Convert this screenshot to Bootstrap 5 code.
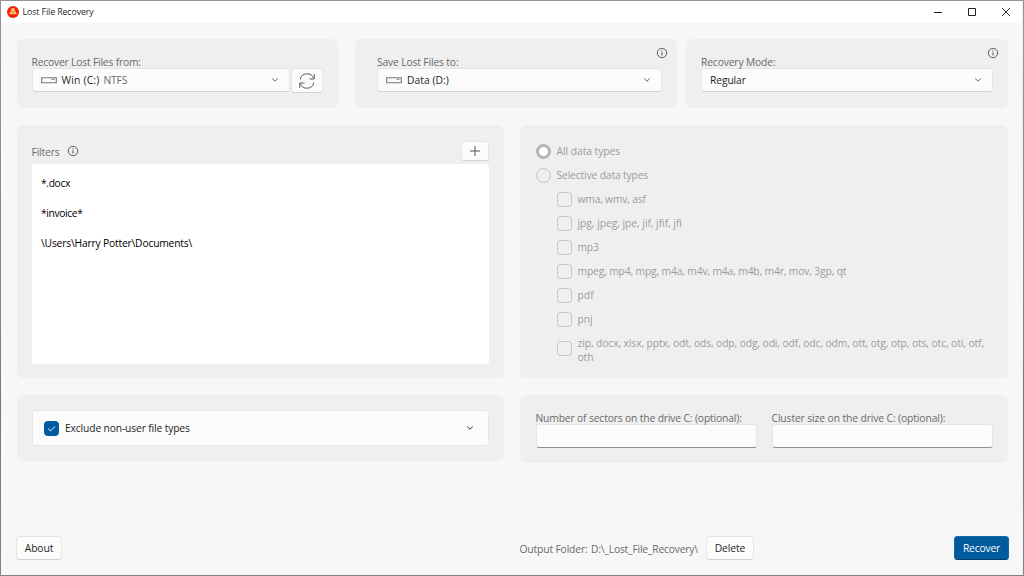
<!DOCTYPE html>
<html lang="en">
<head>
<meta charset="utf-8">
<meta name="viewport" content="width=device-width, initial-scale=1">
<title>Lost File Recovery</title>
<link href="https://cdn.jsdelivr.net/npm/bootstrap@5.3.0/dist/css/bootstrap.min.css" rel="stylesheet">
<style>
body{height:576px;overflow:hidden;padding:1px;background:linear-gradient(#95929a,#858590 55%,#73758a 70%,#838388);font-family:"Open Sans","Noto Sans",sans-serif;font-size:10.3px;line-height:14px;letter-spacing:-.145px;color:#1f1f1f}
.win{height:574px;background:#f7f7f7;border-right:1px solid #f0f0f0}
.titlebar{height:22px;background:#fff;padding-left:6px}
.titlebar .ttl{font-size:8.8px;margin-left:3.5px;letter-spacing:-.1px}
.titlebar svg{display:block}
.caps{gap:24px;margin-right:11px}
.pane{background:#efefef;border-radius:6px}
.main{padding:16px 14px 0 16px}
.top-grid{display:grid;grid-template-columns:321px 17px 322px 9px 322px;height:69px}
.top-grid .pane:nth-child(2){grid-column:3}
.top-grid .pane:nth-child(3){grid-column:5}
.mid-grid{display:grid;grid-template-columns:487px 488px;column-gap:16px;margin-top:17px}
.lbl{color:#6a6a6a;white-space:nowrap}
.txt{white-space:nowrap}
.ctl{background:#fcfcfc;border:1px solid #e5e5e5;border-bottom-color:#d2d2d2;border-radius:3.5px;height:24px}
.combo-row{margin-top:-1px}
.combo{padding:0 10px 0 8px}
.combo svg:last-child{color:#555}
.combo .fs{color:#6a6a6a}
.push{padding:0;color:#1f1f1f;font-size:inherit;line-height:14px;letter-spacing:-.1px;display:flex;align-items:center;justify-content:center;border-radius:3.5px}
.push.go{background:#005a9e;border:1px solid #1468a6;border-bottom-color:#003e6e;color:#fff;width:55px;height:24px;letter-spacing:-.18px}
.filters{background:#fff;border-radius:3.5px;height:200px;padding:12px 9.5px;color:#000}
.filters div{height:30px}
.types{color:#9c9c9c}
.opt{display:flex;align-items:center;height:24px}
.rad{width:15px;height:15px;border:1px solid #c5c5c5;border-radius:50%;margin-right:6px;flex:none}
.rad.on{border:3px solid #b4b4b4;background:#fff}
.chk{width:15px;height:15px;border:1px solid #c5c5c5;border-radius:3.5px;margin-right:6px;flex:none}
.sub-opts{padding-left:21px}
.chk.on{background:#005a9e;border-color:#005a9e}
.field{width:221px;border-bottom:1px solid #8f8f8f;display:block;padding:0;margin-top:-1px}
.foot{margin:73px -1px 0;height:24px}
.ls-wide{letter-spacing:.2px}
.ls-open{letter-spacing:.05px}
.ls-norm{letter-spacing:-.04px}
.ls-soft{letter-spacing:-.106px}
.ls-snug{letter-spacing:-.19px}
.ls-tight{letter-spacing:-.37px}
</style>
</head>
<body>
<svg class="d-none">
<symbol id="drive" viewBox="0 0 16 7"><path d="M.7.7h14.600v5.100H.7z" fill="none" stroke="#777" stroke-width="1.100"/><path d="M10.500 2.300h3" stroke="#777"/></symbol>
<symbol id="chev" viewBox="0 0 8 6"><path d="M1.200 1.500 4 4.200l2.800-2.700" fill="none" stroke="currentColor" stroke-width=".9"/></symbol>
<symbol id="info" viewBox="0 0 12 12"><circle cx="6" cy="6" r="4.700" fill="none" stroke="#4d4d4d" stroke-width=".9"/><path d="M6 5.300v3.200M6 3.300v1.100" stroke="#4d4d4d"/></symbol>
</svg>
<div class="win d-flex flex-column">
<header class="titlebar d-flex align-items-center">
<svg width="12" height="12" viewBox="0 0 12 12"><circle cx="6" cy="6" r="6" fill="#f0200e"/><path d="M2.300 8.300c0-1.800.7-2.600 1.700-2.900C3.500 3.800 4.500 2 6 2s2.500 1.800 2 3.400c1 .3 1.700 1.100 1.700 2.900z" fill="#ffc56c"/><path d="M4 5.600 6 4.800l2 .8M6 6v2" stroke="#f36a28" stroke-width=".6" fill="none"/></svg>
<span class="ttl txt">Lost File Recovery</span>
<div class="caps d-flex ms-auto align-items-center">
<svg width="10" height="10" viewBox="0 0 10 10"><path d="M1 5.500h8" stroke="#222"/></svg>
<svg width="10" height="10" viewBox="0 0 10 10"><path d="M1.500 1.500h7v7h-7z" fill="none" stroke="#222"/></svg>
<svg width="10" height="10" viewBox="0 0 10 10"><path d="m1 1 8 8M9 1 1 9" stroke="#222" stroke-width=".9"/></svg>
</div>
</header>
<main class="main">
<div class="top-grid">
<section class="pane" style="padding:16px 15px 0 14.500px">
<div class="lbl ls-snug">Recover Lost Files from:</div>
<div class="combo-row d-flex" style="gap:1px">
<div class="ctl combo d-flex align-items-center flex-grow-1"><svg width="16" height="7"><use href="#drive"/></svg><span class="txt ls-wide" style="margin-left:5px">Win (C:)</span><span class="fs txt ls-snug" style="margin-left:4px">NTFS</span><svg class="ms-auto" width="8" height="6"><use href="#chev"/></svg></div>
<button class="btn ctl push" aria-label="Refresh" style="width:32px;height:25px"><svg width="18" height="18" viewBox="0 0 18 18" fill="none" stroke="#5c5c5c" stroke-width="1"><path d="M2.200 7.500A7 7 0 0 1 15.700 6.500M15.800 10.500A7 7 0 0 1 2.300 11.500"/><path d="M16.200 2v5h-4.700M1.800 16v-5h4.700"/></svg></button>
</div>
</section>
<section class="pane position-relative" style="padding:16px 15px 0 22px">
<svg class="position-absolute" style="right:9px;top:8px" width="12" height="12"><use href="#info"/></svg>
<div class="lbl">Save Lost Files to:</div>
<div class="ctl combo combo-row d-flex align-items-center"><svg width="16" height="7"><use href="#drive"/></svg><span class="txt ls-open" style="margin-left:5px">Data (D:)</span><svg class="ms-auto" width="8" height="6"><use href="#chev"/></svg></div>
</section>
<section class="pane position-relative" style="padding:16px 15px 0 15px">
<svg class="position-absolute" style="right:9px;top:8px" width="12" height="12"><use href="#info"/></svg>
<div class="lbl">Recovery Mode:</div>
<div class="ctl combo combo-row d-flex align-items-center"><span class="txt ls-soft">Regular</span><svg class="ms-auto" width="8" height="6"><use href="#chev"/></svg></div>
</section>
</div>
<div class="mid-grid">
<section class="pane" style="height:253px;padding:16px 15px 0 14.500px">
<div class="d-flex align-items-start" style="height:23px"><span class="lbl" style="margin-top:4px">Filters</span><svg width="12" height="12" style="margin:4px 0 0 7.500px"><use href="#info"/></svg><button class="btn ctl push ms-auto" aria-label="Add filter" style="width:28px;height:20px"><svg width="12" height="12" viewBox="0 0 12 12"><path d="M6 1v10M1 6h10" stroke="#444" stroke-width=".9"/></svg></button></div>
<div class="filters"><div class="ls-tight">*.docx</div><div class="ls-tight">*invoice*</div><div class="ls-snug">\Users\Harry Potter\Documents\</div></div>
</section>
<section class="pane types" style="padding:14px 15px 0 15.500px">
<div class="opt"><span class="rad on"></span><span class="ls-norm">All data types</span></div>
<div class="opt"><span class="rad"></span><span>Selective data types</span></div>
<div class="sub-opts">
<div class="opt"><span class="chk"></span><span class="ls-snug">wma, wmv, asf</span></div>
<div class="opt"><span class="chk"></span><span class="ls-norm">jpg, jpeg, jpe, jif, jfif, jfi</span></div>
<div class="opt"><span class="chk"></span><span class="ls-snug">mp3</span></div>
<div class="opt"><span class="chk"></span><span>mpeg, mp4, mpg, m4a, m4v, m4a, m4b, m4r, mov, 3gp, qt</span></div>
<div class="opt"><span class="chk"></span><span class="ls-open">pdf</span></div>
<div class="opt"><span class="chk"></span><span class="ls-soft">pnj</span></div>
<div class="opt" style="height:34px"><span class="chk"></span><div class="txt ls-soft pt-1">zip, docx, xlsx, pptx, odt, ods, odp, odg, odi, odf, odc, odm, ott, otg, otp, ots, otc, oti, otf,<br>oth</div></div>
</div>
</section>
</div>
<div class="mid-grid">
<section class="pane" style="height:66px;padding:15px 15px 0 14.500px">
<div class="ctl d-flex align-items-center" style="height:36px;padding:0 14px 0 11.500px;border-bottom-color:#e5e5e5"><span class="chk on d-flex"><svg width="13" height="13" viewBox="0 0 13 13"><path d="m3.200 6.700 2.300 2.200 4.500-4.500" fill="none" stroke="#fff" stroke-width="1"/></svg></span><span>Exclude non-user file types</span><svg class="ms-auto" width="8" height="6"><use href="#chev"/></svg></div>
</section>
<section class="pane d-flex" style="height:68px;padding:16px 14.500px 0 15.500px;gap:15px">
<div><div class="lbl">Number of sectors on the drive C: (optional):</div><input class="ctl field" aria-label="Number of sectors"></div>
<div><div class="lbl ls-soft">Cluster size on the drive C: (optional):</div><input class="ctl field" aria-label="Cluster size"></div>
</section>
</div>
<footer class="foot d-flex align-items-center">
<button class="btn ctl push" style="width:46px">About</button>
<span class="lbl" style="margin-left:457.500px;width:71.500px;margin-top:1px">Output Folder:</span><span class="lbl ls-snug" style="width:107px;margin-top:1px">D:\_Lost_File_Recovery\</span>
<button class="btn ctl push" style="width:48px;margin-left:8px">Delete</button>
<button class="btn push go ms-auto">Recover</button>
</footer>
</main>
</div>
<script src="https://cdn.jsdelivr.net/npm/bootstrap@5.3.0/dist/js/bootstrap.bundle.min.js"></script>
</body>
</html>
